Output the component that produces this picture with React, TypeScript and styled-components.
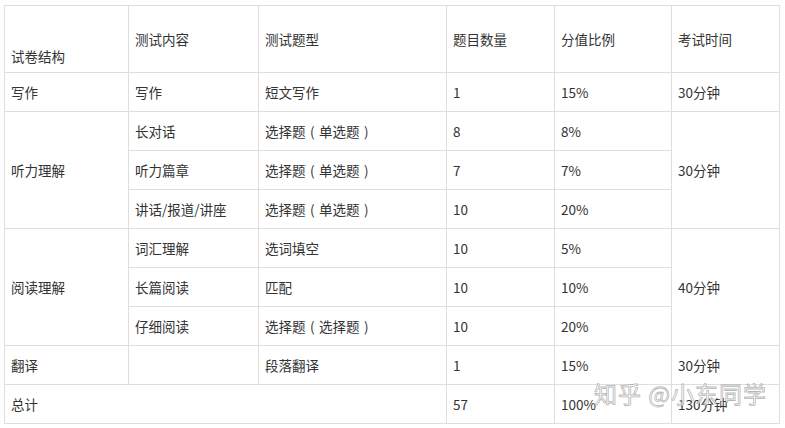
import React from 'react';
import styled, { createGlobalStyle } from 'styled-components';

const GlobalStyle = createGlobalStyle`
  html, body {
    margin: 0;
    padding: 0;
    background: #fff;
  }
  body {
    font-family: "Noto Sans CJK SC", "Liberation Sans", sans-serif;
  }
`;

const Page = styled.div`
  position: relative;
  width: 785px;
  height: 428px;
  padding: 5px 0 0 4px;
  box-sizing: border-box;
  overflow: hidden;
`;

const Table = styled.table`
  border-collapse: collapse;
  table-layout: fixed;
  width: 775px;
  color: #333;
  font-size: 13.5px;
`;

const Cell = styled.td<{ $head?: boolean; $low?: boolean }>`
  box-sizing: border-box;
  border: 1px solid #dedede;
  height: ${(p) => (p.$head ? '67px' : '39px')};
  padding: ${(p) => (p.$low ? '0 6px 7px 6px' : '0 6px')};
  vertical-align: ${(p) => (p.$low ? 'bottom' : 'middle')};
  white-space: nowrap;
  line-height: 18px;
`;

// full-width bracket drawn centred in its em box, as in the source font
const Paren = styled.span`
  display: inline-block;
  width: 1em;
  text-align: center;
`;

const Watermark = styled.div`
  position: absolute;
  left: 594px;
  top: 378px;
  font-size: 23px;
  line-height: 30px;
  letter-spacing: 1px;
  color: rgba(255, 255, 255, 0.75);
  -webkit-text-stroke: 0.8px rgba(150, 150, 150, 0.7);
  pointer-events: none;
`;

const widths = [124, 130, 188, 108, 117, 108];

function Choice({ kind }: { kind: string }) {
  return (
    <>
      选择题<Paren>(</Paren>{kind}<Paren>)</Paren>
    </>
  );
}

export default function App() {
  return (
    <>
      <GlobalStyle />
      <Page>
        <Table>
          <colgroup>
            {widths.map((w, i) => (
              <col key={i} style={{ width: w }} />
            ))}
          </colgroup>
          <tbody>
            <tr>
              <Cell $head $low>试卷结构</Cell>
              <Cell $head>测试内容</Cell>
              <Cell $head>测试题型</Cell>
              <Cell $head>题目数量</Cell>
              <Cell $head>分值比例</Cell>
              <Cell $head>考试时间</Cell>
            </tr>
            <tr>
              <Cell>写作</Cell>
              <Cell>写作</Cell>
              <Cell>短文写作</Cell>
              <Cell>1</Cell>
              <Cell>15%</Cell>
              <Cell>30分钟</Cell>
            </tr>
            <tr>
              <Cell rowSpan={3}>听力理解</Cell>
              <Cell>长对话</Cell>
              <Cell><Choice kind="单选题" /></Cell>
              <Cell>8</Cell>
              <Cell>8%</Cell>
              <Cell rowSpan={3}>30分钟</Cell>
            </tr>
            <tr>
              <Cell>听力篇章</Cell>
              <Cell><Choice kind="单选题" /></Cell>
              <Cell>7</Cell>
              <Cell>7%</Cell>
            </tr>
            <tr>
              <Cell>讲话/报道/讲座</Cell>
              <Cell><Choice kind="单选题" /></Cell>
              <Cell>10</Cell>
              <Cell>20%</Cell>
            </tr>
            <tr>
              <Cell rowSpan={3}>阅读理解</Cell>
              <Cell>词汇理解</Cell>
              <Cell>选词填空</Cell>
              <Cell>10</Cell>
              <Cell>5%</Cell>
              <Cell rowSpan={3}>40分钟</Cell>
            </tr>
            <tr>
              <Cell>长篇阅读</Cell>
              <Cell>匹配</Cell>
              <Cell>10</Cell>
              <Cell>10%</Cell>
            </tr>
            <tr>
              <Cell>仔细阅读</Cell>
              <Cell><Choice kind="选择题" /></Cell>
              <Cell>10</Cell>
              <Cell>20%</Cell>
            </tr>
            <tr>
              <Cell>翻译</Cell>
              <Cell></Cell>
              <Cell>段落翻译</Cell>
              <Cell>1</Cell>
              <Cell>15%</Cell>
              <Cell>30分钟</Cell>
            </tr>
            <tr>
              <Cell colSpan={3}>总计</Cell>
              <Cell>57</Cell>
              <Cell>100%</Cell>
              <Cell>130分钟</Cell>
            </tr>
          </tbody>
        </Table>
        <Watermark>知乎 @小东同学</Watermark>
      </Page>
    </>
  );
}
